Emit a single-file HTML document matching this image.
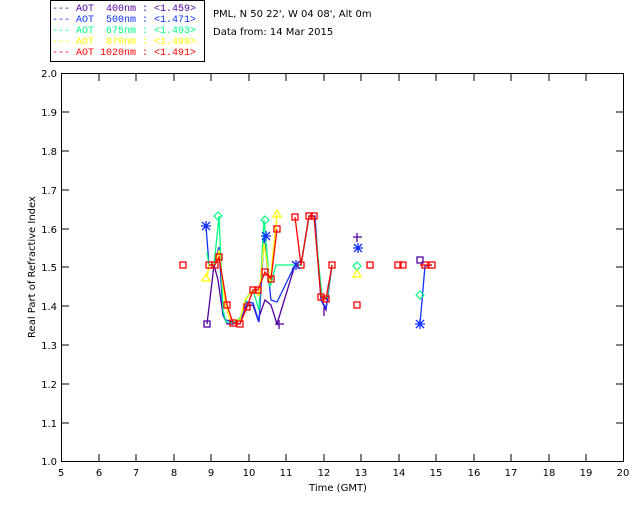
<!DOCTYPE html>
<html><head><style>
body{margin:0;background:#fff;width:640px;height:512px;overflow:hidden}
svg{display:block}
text{font-family:"DejaVu Sans","Liberation Sans",sans-serif;font-size:10px}
.lg{font-family:"Liberation Mono",monospace;font-size:10px;white-space:pre}
</style></head><body>
<svg width="640" height="512" viewBox="0 0 640 512">
<rect x="50.5" y="0.5" width="154" height="61" fill="none" stroke="#000"/>
<g>
<text class="lg" x="52" y="11" fill="#5000a0" xml:space="preserve">--- AOT  400nm : &lt;1.459&gt;</text>
<text class="lg" x="52" y="22" fill="#1030ff" xml:space="preserve">--- AOT  500nm : &lt;1.471&gt;</text>
<text class="lg" x="52" y="33" fill="#00ff80" xml:space="preserve">--- AOT  675nm : &lt;1.493&gt;</text>
<text class="lg" x="52" y="44" fill="#ffff00" xml:space="preserve">--- AOT  870nm : &lt;1.499&gt;</text>
<text class="lg" x="52" y="55" fill="#ff0000" xml:space="preserve">--- AOT 1020nm : &lt;1.491&gt;</text>
<text x="213" y="17" fill="#000">PML, N 50 22', W 04 08', Alt 0m</text>
<text x="213" y="35" fill="#000">Data from: 14 Mar 2015</text>
</g>
<rect x="61.5" y="73.5" width="562" height="388" fill="none" stroke="#000"/>
<g stroke="#000">
<path d="M99 74v7M136 74v7M174 74v7M211 74v7M249 74v7M286 74v7M324 74v7M361 74v7M399 74v7M436 74v7M474 74v7M511 74v7M549 74v7M586 74v7M99 461v-7M136 461v-7M174 461v-7M211 461v-7M249 461v-7M286 461v-7M324 461v-7M361 461v-7M399 461v-7M436 461v-7M474 461v-7M511 461v-7M549 461v-7M586 461v-7M62 112h7M62 151h7M62 190h7M62 229h7M62 267h7M62 306h7M62 345h7M62 384h7M62 423h7M623 112h-7M623 151h-7M623 190h-7M623 229h-7M623 267h-7M623 306h-7M623 345h-7M623 384h-7M623 423h-7"/>
</g>
<g text-anchor="end" fill="#000">
<text x="57" y="77">2.0</text><text x="57" y="116">1.9</text><text x="57" y="155">1.8</text><text x="57" y="194">1.7</text><text x="57" y="233">1.6</text><text x="57" y="271">1.5</text><text x="57" y="310">1.4</text><text x="57" y="349">1.3</text><text x="57" y="388">1.2</text><text x="57" y="427">1.1</text><text x="57" y="465">1.0</text>
</g>
<g text-anchor="middle" fill="#000">
<text x="61" y="476">5</text><text x="99" y="476">6</text><text x="136" y="476">7</text><text x="174" y="476">8</text><text x="211" y="476">9</text><text x="249" y="476">10</text><text x="286" y="476">11</text><text x="324" y="476">12</text><text x="361" y="476">13</text><text x="399" y="476">14</text><text x="436" y="476">15</text><text x="474" y="476">16</text><text x="511" y="476">17</text><text x="549" y="476">18</text><text x="586" y="476">19</text><text x="623" y="476">20</text>
<text x="338" y="491">Time (GMT)</text>
<text transform="translate(35 267) rotate(-90)">Real Part of Refractive Index</text>
</g>
<g fill="none" stroke-width="1.3">
<polyline stroke="#5000a0" points="207,324 214,265 218,280 223,315 227,324 233,324 240,320 247,306 253,305 258,320 265,300 271,305 277,324 295,265 301,265 309,216 314,216 317,250 321,300 326,310 332,265"/>
<polyline stroke="#1030ff" points="206,226 209,265 214,265 219,247 223,315 226,320 233,322 240,324 247,302 253,303 259,322 264,237 271,300 277,302 295,265 301,265 309,216 315,216 321,300 326,308 332,265"/>
<polyline stroke="#00ff80" points="207,252 209,265 214,265 219,216 223,310 226,322 233,323 240,318 247,297 253,290 259,310 264,220 270,287 276,265 295,265 301,265 309,216 314,216 322,297 327,298 332,265"/>
<polyline stroke="#ffff00" points="207,278 209,265 215,265 219,250 225,303 230,320 240,320 245,300 253,290 259,296 264,243 270,283 277,214"/>
<polyline stroke="#ff0000" points="209,265 215,265 219,257 227,305 233,323 240,324 247,307 253,290 258,290 265,272 271,279 277,229"/>
<polyline stroke="#ff0000" points="295,217 301,265 309,216 314,216 321,297 326,299 332,265"/>
<polyline stroke="#1030ff" points="420,324 425,266 432,265"/>
<polyline stroke="#ff0000" points="420,265 425,265 432,265"/>
</g>
<g fill="none" stroke="#ff0000" stroke-width="1.3">
<rect x="180" y="262" width="6" height="6"/><rect x="206" y="262" width="6" height="6"/><rect x="212" y="262" width="6" height="6"/><rect x="216" y="254" width="6" height="6"/><rect x="224" y="302" width="6" height="6"/><rect x="230" y="320" width="6" height="6"/><rect x="237" y="321" width="6" height="6"/><rect x="244" y="304" width="6" height="6"/><rect x="250" y="287" width="6" height="6"/><rect x="255" y="287" width="6" height="6"/><rect x="262" y="269" width="6" height="6"/><rect x="268" y="276" width="6" height="6"/><rect x="274" y="226" width="6" height="6"/><rect x="292" y="214" width="6" height="6"/><rect x="298" y="262" width="6" height="6"/><rect x="306" y="213" width="6" height="6"/><rect x="311" y="213" width="6" height="6"/><rect x="318" y="294" width="6" height="6"/><rect x="323" y="296" width="6" height="6"/><rect x="329" y="262" width="6" height="6"/><rect x="354" y="302" width="6" height="6"/><rect x="367" y="262" width="6" height="6"/><rect x="395" y="262" width="6" height="6"/><rect x="400" y="262" width="6" height="6"/><rect x="422" y="262" width="6" height="6"/><rect x="429" y="262" width="6" height="6"/><rect x="204" y="321" width="6" height="6" stroke="#5000a0"/><rect x="417" y="257" width="6" height="6" stroke="#5000a0"/>
</g>
<g stroke="#1030ff" stroke-width="1.3" fill="none">
<path d="M202 222l8 8M210 222l-8 8M206 221v10M201 226h10M354 244l8 8M362 244l-8 8M358 243v10M353 248h10M416 320l8 8M424 320l-8 8M420 319v10M415 324h10M262 232l8 8M270 232l-8 8M266 231v10M261 236h10M292 261l8 8M300 261l-8 8M296 260v10"/>
</g>
<g stroke="#5000a0" stroke-width="1.3"><path d="M353 237h9M357 233v9M275 324h9M279 320v9M324 307v9"/></g>
<g stroke="#00ff80" fill="none" stroke-width="1.2"><path d="M357 262l4 4-4 4-4-4zM218 212l4 4-4 4-4-4zM265 216l4 4-4 4-4-4zM420 291l4 4-4 4-4-4z"/></g>
<g stroke="#ffff00" fill="none" stroke-width="1.2"><path d="M357 270l4 7h-8zM277 210l4 7h-8zM206 274l4 7h-8z"/></g>
</svg>
</body></html>
